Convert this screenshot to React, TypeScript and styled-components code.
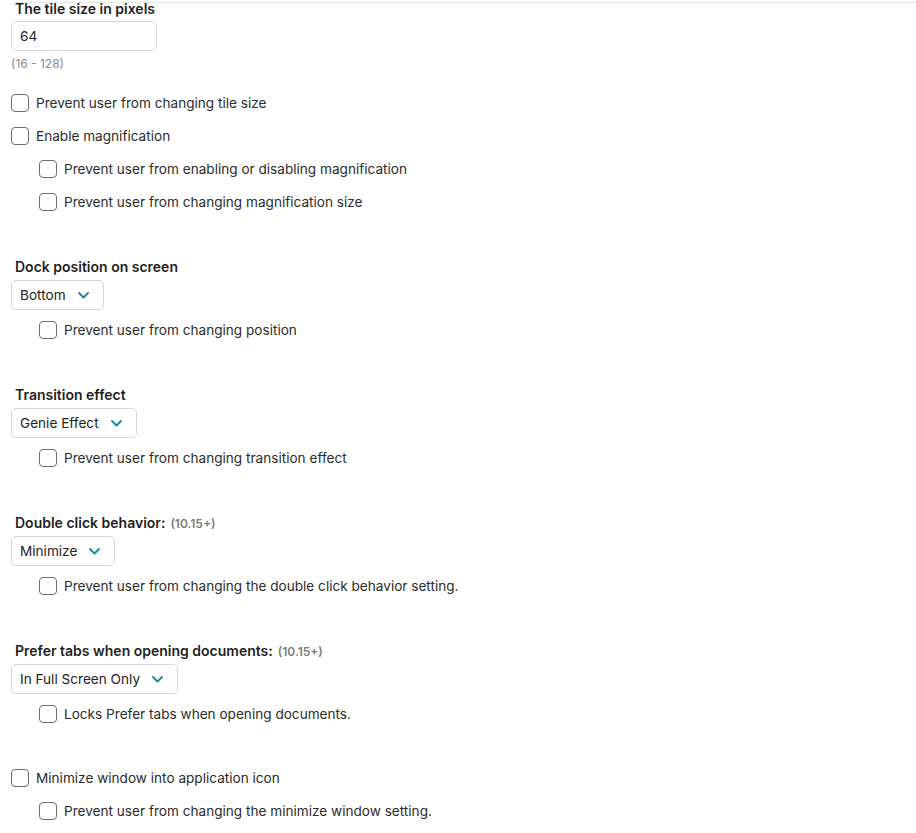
import React from 'react';
import styled, { createGlobalStyle } from 'styled-components';

const GlobalStyle = createGlobalStyle`
  body {
    margin: 0;
    background: #ffffff;
    font-family: Inter, "Liberation Sans", sans-serif;
    color: #2b2b2b;
  }
`;

const Page = styled.div`
  position: relative;
  padding: 0 0 0 11px;
  width: 916px;
  box-sizing: border-box;
`;

const TopRule = styled.div`
  position: absolute;
  top: 2px;
  left: 13px;
  right: 0;
  height: 1px;
  background: #e6e6e6;
`;

const Section = styled.div<{ $gap?: number }>`
  display: flex;
  flex-direction: column;
  align-items: flex-start;
  margin-top: ${(p) => p.$gap ?? 40}px;
`;

const Heading = styled.div`
  height: 18px;
  line-height: 18px;
  padding-left: 4px;
  font-size: 14px;
  font-weight: 600;
  color: #1f1f1f;
`;

const Version = styled.span`
  margin-left: 5px;
  font-size: 12px;
  font-weight: 600;
  color: #7a7a7a;
`;

const NumberInput = styled.div`
  margin-top: 3px;
  width: 146px;
  height: 30px;
  box-sizing: border-box;
  border: 1px solid #d7d7d7;
  border-radius: 5px;
  padding: 0 8px;
  display: flex;
  align-items: center;
  font-size: 13.6px;
  color: #222;
`;

const Hint = styled.div`
  margin-top: 6px;
  line-height: 14px;
  font-size: 12px;
  color: #8a8a8a;
`;

const Select = styled.div`
  margin-top: 4px;
  height: 30px;
  box-sizing: border-box;
  border: 1px solid #d7d7d7;
  border-radius: 5px;
  padding: 0 14px 0 8px;
  display: inline-flex;
  align-items: center;
  gap: 12px;
  font-size: 13.6px;
  color: #222;
`;

const Rows = styled.div<{ $top: number }>`
  margin-top: ${(p) => p.$top}px;
  display: flex;
  flex-direction: column;
`;

const CheckRow = styled.label<{ $nested?: boolean }>`
  height: 33px;
  display: flex;
  align-items: center;
  gap: 7px;
  padding-left: ${(p) => (p.$nested ? 28 : 0)}px;
  font-size: 13.6px;
  color: #2b2b2b;
`;

const Box = styled.span`
  width: 18px;
  height: 18px;
  box-sizing: border-box;
  border: 1px solid #6e6e6e;
  border-radius: 4px;
  background: #fff;
  flex-shrink: 0;
`;

const Chevron = () => (
  <svg width="11" height="7" viewBox="0 0 11 7" fill="none">
    <polyline points="1,1 5.5,5.5 10,1" stroke="#12899a" strokeWidth="1.8" strokeLinecap="round" strokeLinejoin="round" />
  </svg>
);

function Check({ label, nested }: { label: string; nested?: boolean }) {
  return (
    <CheckRow $nested={nested}>
      <Box />
      <span>{label}</span>
    </CheckRow>
  );
}

function DropdownSection({ title, version, value, lock }: { title: string; version?: string; value: string; lock: string }) {
  return (
    <Section>
      <Heading>
        {title}
        {version && <Version>{version}</Version>}
      </Heading>
      <Select>
        <span>{value}</span>
        <Chevron />
      </Select>
      <Rows $top={3}>
        <Check nested label={lock} />
      </Rows>
    </Section>
  );
}

export default function App() {
  return (
    <Page>
      <GlobalStyle />
      <TopRule />
      <Section $gap={0}>
        <Heading>The tile size in pixels</Heading>
        <NumberInput>64</NumberInput>
        <Hint>(16 - 128)</Hint>
        <Rows $top={15}>
          <Check label="Prevent user from changing tile size" />
          <Check label="Enable magnification" />
          <Check nested label="Prevent user from enabling or disabling magnification" />
          <Check nested label="Prevent user from changing magnification size" />
        </Rows>
      </Section>

      <DropdownSection title="Dock position on screen" value="Bottom" lock="Prevent user from changing position" />
      <DropdownSection title="Transition effect" value="Genie Effect" lock="Prevent user from changing transition effect" />
      <DropdownSection
        title="Double click behavior:"
        version="(10.15+)"
        value="Minimize"
        lock="Prevent user from changing the double click behavior setting."
      />
      <DropdownSection
        title="Prefer tabs when opening documents:"
        version="(10.15+)"
        value="In Full Screen Only"
        lock="Locks Prefer tabs when opening documents."
      />

      <Rows $top={31}>
        <Check label="Minimize window into application icon" />
        <Check nested label="Prevent user from changing the minimize window setting." />
      </Rows>
    </Page>
  );
}
